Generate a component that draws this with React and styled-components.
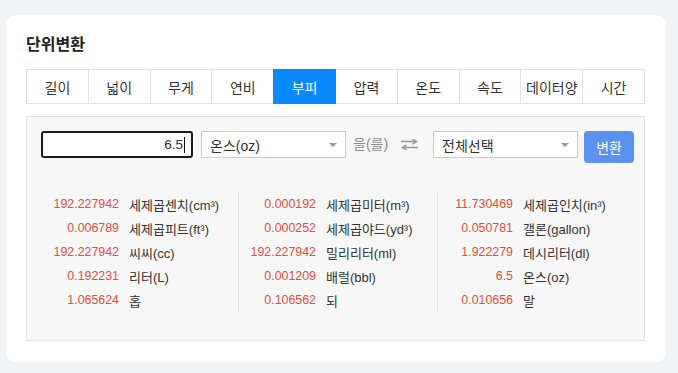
import React from "react";
import styled, { createGlobalStyle } from "styled-components";

const Global = createGlobalStyle`
  html, body { margin: 0; padding: 0; background: #f1f2f6; }
  body {
    font-family: "Liberation Sans", "Noto Sans CJK KR", sans-serif;
    color: #333;
  }
  #root { padding: 15px 12px 11px 6px; }
`;

const Card = styled.div`
  width: 660px;
  box-sizing: border-box;
  background: #fff;
  border-radius: 10px;
  padding: 17px 21px 21px 20px;
`;

const Title = styled.h2`
  margin: 0 0 15px;
  font-size: 16px;
  font-weight: 700;
  line-height: 22px;
  color: #222;
  font-family: "Noto Sans CJK KR", sans-serif;
`;

const Tabs = styled.div`
  display: flex;
  height: 35px;
`;

const Tab = styled.div`
  flex: 1;
  display: flex;
  align-items: center;
  justify-content: center;
  box-sizing: border-box;
  border: 1px solid ${(p) => (p.$active ? "#0889fd" : "#e1e1e1")};
  margin-left: -1px;
  &:first-child { margin-left: 0; }
  background: ${(p) => (p.$active ? "#0889fd" : "#fff")};
  color: ${(p) => (p.$active ? "#fff" : "#333")};
  font-size: 14px;
  font-family: "Noto Sans CJK KR", sans-serif;
  position: relative;
  z-index: ${(p) => (p.$active ? 1 : 0)};
`;

const Panel = styled.div`
  margin-top: 12px;
  height: 225px;
  box-sizing: border-box;
  background: #f7f7f7;
  border: 1px solid #e3e3e3;
  padding: 14px 8px 0 13px;
`;

const Controls = styled.div`
  display: flex;
  align-items: flex-start;
  padding-left: 1px;
`;

const NumInput = styled.div`
  width: 152px;
  height: 27px;
  box-sizing: border-box;
  border: 2px solid #1b1b1b;
  border-radius: 3px;
  background: #fff;
  display: flex;
  align-items: center;
  justify-content: flex-end;
  padding-right: 6px;
  font-size: 13.5px;
  color: #333;
`;

const Caret = styled.span`
  display: inline-block;
  width: 1px;
  height: 16px;
  background: #111;
  margin-left: 1px;
`;

const Select = styled.div`
  width: 145px;
  height: 27px;
  box-sizing: border-box;
  border: 1px solid #cbcbcb;
  background: #fff;
  display: flex;
  align-items: center;
  padding-left: 8px;
  margin-left: ${(p) => p.$ml || 0}px;
  font-size: 14px;
  color: #333;
  position: relative;
  &::after {
    content: "";
    position: absolute;
    right: 8px;
    top: 11px;
    border-left: 4px solid transparent;
    border-right: 4px solid transparent;
    border-top: 4px solid #999;
  }
`;

const Josa = styled.span`
  margin-left: 7px;
  line-height: 27px;
  font-size: 14px;
  color: #8a8a8a;
`;

const Swap = styled.svg`
  margin-left: 13px;
  margin-top: 8px;
  display: block;
`;

const Button = styled.button`
  margin-left: 6px;
  width: 50px;
  height: 32px;
  border: none;
  border-radius: 4px;
  background: #5a92f1;
  color: #fff;
  font-size: 14px;
  font-family: "Noto Sans CJK KR", sans-serif;
  padding: 0;
`;

const Results = styled.div`
  display: grid;
  grid-template-columns: 198px 199px 199px;
  margin-top: 29px;
`;

const Col = styled.div`
  border-left: ${(p) => (p.$first ? "none" : "1px solid #e2e2e2")};
  display: flex;
  flex-direction: column;
`;

const Row = styled.div`
  display: flex;
  align-items: center;
  height: 24px;
`;

const Value = styled.span`
  width: ${(p) => p.$w}px;
  text-align: right;
  font-size: 12.4px;
  color: #e9493e;
`;

const Label = styled.span`
  margin-left: 10px;
  font-size: 13px;
  color: #333;
  white-space: nowrap;
`;

const tabs = ["길이", "넓이", "무게", "연비", "부피", "압력", "온도", "속도", "데이터양", "시간"];

const cols = [
  {
    w: 79,
    rows: [
      ["192.227942", "세제곱센치(cm³)"],
      ["0.006789", "세제곱피트(ft³)"],
      ["192.227942", "씨씨(cc)"],
      ["0.192231", "리터(L)"],
      ["1.065624", "홉"],
    ],
  },
  {
    w: 77,
    rows: [
      ["0.000192", "세제곱미터(m³)"],
      ["0.000252", "세제곱야드(yd³)"],
      ["192.227942", "밀리리터(ml)"],
      ["0.001209", "배럴(bbl)"],
      ["0.106562", "되"],
    ],
  },
  {
    w: 75,
    rows: [
      ["11.730469", "세제곱인치(in³)"],
      ["0.050781", "갤론(gallon)"],
      ["1.922279", "데시리터(dl)"],
      ["6.5", "온스(oz)"],
      ["0.010656", "말"],
    ],
  },
];

export default function App() {
  return (
    <>
      <Global />
      <Card>
        <Title>단위변환</Title>
        <Tabs>
          {tabs.map((t) => (
            <Tab key={t} $active={t === "부피"}>
              {t}
            </Tab>
          ))}
        </Tabs>
        <Panel>
          <Controls>
            <NumInput>
              6.5
              <Caret />
            </NumInput>
            <Select $ml={8}>온스(oz)</Select>
            <Josa>을(를)</Josa>
            <Swap width="17" height="11" viewBox="0 0 17 11">
              <g fill="none" stroke="#9a9a9a" strokeWidth="1.6">
                <path d="M0 2.5 H15" />
                <path d="M11.5 0 L15.5 2.5 L11.5 5" />
                <path d="M2 8.5 H17" />
                <path d="M5.5 6 L1.5 8.5 L5.5 11" />
              </g>
            </Swap>
            <Select $ml={15}>전체선택</Select>
            <Button>변환</Button>
          </Controls>
          <Results>
            {cols.map((c, i) => (
              <Col key={i} $first={i === 0}>
                {c.rows.map(([v, l]) => (
                  <Row key={l}>
                    <Value $w={c.w}>{v}</Value>
                    <Label>{l}</Label>
                  </Row>
                ))}
              </Col>
            ))}
          </Results>
        </Panel>
      </Card>
    </>
  );
}
